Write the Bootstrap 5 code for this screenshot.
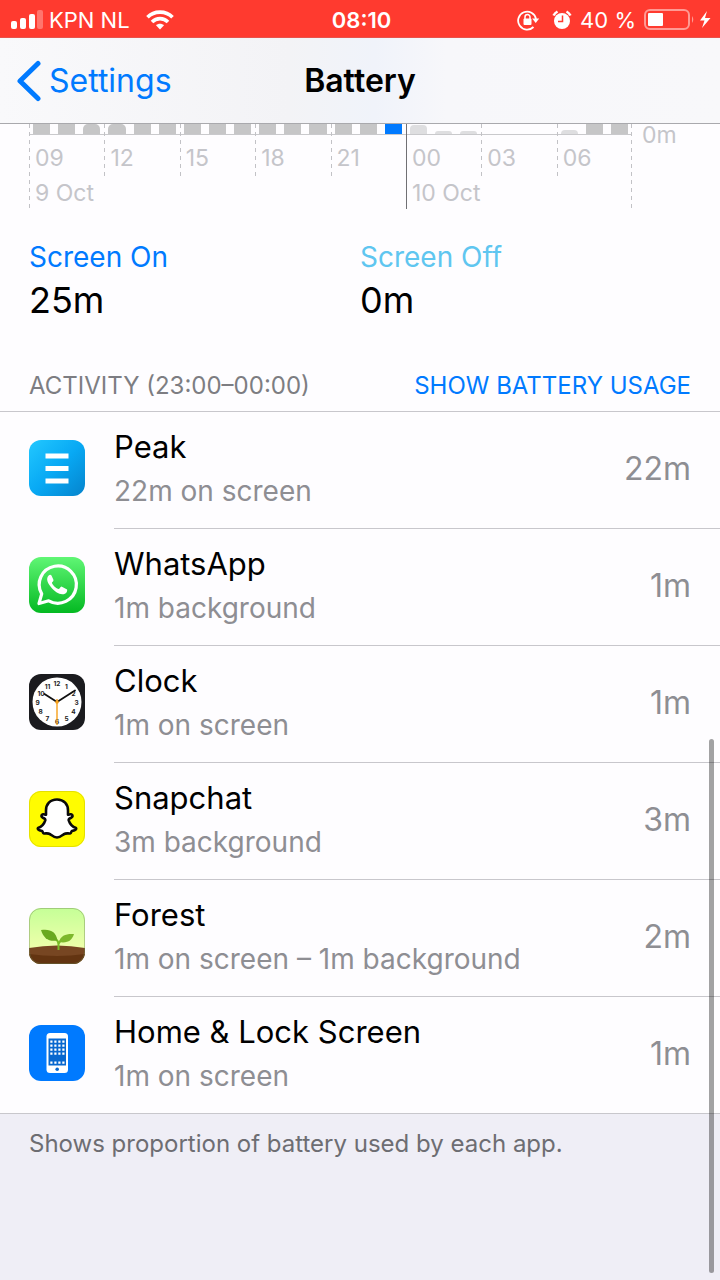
<!DOCTYPE html>
<html lang="en">
<head>
<meta charset="utf-8">
<meta name="viewport" content="width=device-width, initial-scale=1">
<title>Battery</title>
<link href="https://cdn.jsdelivr.net/npm/bootstrap@5.3.0/dist/css/bootstrap.min.css" rel="stylesheet">
<style>
  :root { --ios-blue: #007aff; --ios-line: #c8c7cc; --ios-grey: #8e8e93; }
  body { font-family: Inter, Roboto, sans-serif; background: #efeef6; color: #000; }
  svg { display: block; flex: none; }
  .thirds { display: grid; grid-template-columns: 1fr auto 1fr; align-items: center; }
  .status { background: #ff3a2f; color: #fff; height: 38px; padding: 2px 8px 0 11px; font-size: 22px; line-height: 24px; border-bottom: 1px solid #e8524b; }
  .status .carrier { margin: 0 16px 0 5px; }
  .topbar { background: linear-gradient(90deg, #f9f9fb, #f3f3f6 40%, #f0f3fa 52%, #f7f7fa 62%, #f8f8fa); height: 86px; padding: 0 16px; border-bottom: 1px solid #a9a9ad; }
  .topbar h1 { font-size: 32px; line-height: 40px; font-weight: 600; }
  .back { color: var(--ios-blue); font-size: 32px; line-height: 40px; gap: 7px; }
  .panel { background: #fefdff; }
  .chart { padding-left: 29px; color: #c5c5ca; font-size: 23px; line-height: 28px; }
  .segment { flex: 1 1 0; position: relative; }
  .slots { height: 11px; border-bottom: 1px solid #c9c9cc; }
  .slot { flex: 1 1 0; padding: 0 4px; }
  .usage { background: #c6c6c7; }
  .usage.top-round { border-radius: 5px 5px 0 0; }
  .usage.faint { background: #dedee0; border-radius: 4px 4px 0 0; }
  .usage.active { background: var(--ios-blue); }
  .tick { position: absolute; left: 0; top: 0; width: 1px; height: 54px; background: repeating-linear-gradient(#c2c2c6 0 4px, transparent 4px 8px); }
  .tick.long { height: 85px; }
  .tick.solid { height: 85px; background: #707074; }
  .tick.end { left: auto; right: 0; }
  .hour { padding: 9px 0 0 6px; }
  .day { padding: 7px 0 0 6px; height: 36px; white-space: nowrap; }
  .zero { flex: 0 0 88px; padding-left: 10px; line-height: 22px; }
  .totals { padding: 31px 29px 0; }
  .totals dt { font-weight: 400; font-size: 28px; line-height: 36px; }
  .totals dd { font-size: 36px; line-height: 50px; margin: 0; }
  .on { color: var(--ios-blue); }
  .off { color: #5fc6f0; }
  .heading { padding: 43px 29px 7px; font-size: 24px; line-height: 36px; color: #7d7d82; border-bottom: 1px solid var(--ios-line); }
  .heading h2 { font-size: 24px; line-height: 36px; font-weight: 400; }
  .heading button { color: var(--ios-blue); background: none; border: 0; padding: 0; }
  .apps { padding-left: 29px; }
  .app-row { gap: 29px; }
  .app-row > svg { margin-bottom: 5px; }
  .app-body { border-bottom: 1px solid var(--ios-line); padding: 13px 29px 15px 0; }
  .app-row:last-child .app-body { border-color: transparent; }
  .app-name { font-size: 31px; line-height: 44px; }
  .app-time { font-size: 28px; line-height: 44px; color: var(--ios-grey); }
  .app-total { font-size: 32px; color: var(--ios-grey); }
  .note { border-top: 1px solid var(--ios-line); margin-top: -1px; padding: 12px 29px 100px; font-size: 24px; line-height: 36px; color: #6d6d72; }
  .scroll-thumb { position: fixed; right: 6px; top: 739px; bottom: 7px; width: 5px; border-radius: 3px; background: rgba(0,0,0,.36); }
</style>
</head>
<body>
<div class="thirds status">
  <div class="d-flex align-items-center">
    <svg width="33" height="20" viewBox="0 0 33 20" fill="#fff" aria-hidden="true"><rect x="0" y="11" width="6" height="8" rx="2"/><rect x="9" y="8" width="6" height="11" rx="2"/><rect x="18" y="4" width="6" height="15" rx="2"/><rect x="26" y="0" width="6" height="19" rx="2" opacity=".3"/></svg>
    <span class="carrier">KPN NL</span>
    <svg width="28" height="20" viewBox="0 0 28 20" fill="none" stroke="#fff" stroke-width="3.6" aria-hidden="true"><path d="M1.500 7.200C8 .4 20 .4 26.500 7.200M6 12C10.500 7.500 17.500 7.500 22 12"/><path d="M14 19.500l-4-4.300c2.400-2 5.600-2 8 0z" fill="#fff" stroke="none"/></svg>
  </div>
  <div class="fw-semibold">08:10</div>
  <div class="d-flex align-items-center justify-content-end">
    <svg class="me-1" width="23" height="22" viewBox="0 0 23 22" aria-hidden="true"><path d="M16.500 18A9 9 0 1 1 19 10" fill="none" stroke="#fff" stroke-width="1.800"/><path d="M15.200 9.500h7l-3.500 4.500z" fill="#fff"/><rect x="6.500" y="9.500" width="8" height="6.500" rx="1" fill="#fff"/><path d="M8 10V8a2.500 2.500 0 0 1 5 0v2" fill="none" stroke="#fff" stroke-width="1.500"/></svg>
    <svg class="ms-2 me-2" width="20" height="20" viewBox="0 0 20 20" aria-hidden="true"><circle cx="10" cy="11" r="8" fill="#fff"/><path d="M1.500 5.500A10 10 0 0 1 5.500 1.500M18.500 5.500A10 10 0 0 0 14.500 1.500" stroke="#fff" stroke-width="2.500" fill="none"/><path d="M10.500 5.500V11.500H6" stroke="#ff3a2f" stroke-width="1.500" fill="none"/></svg>
    <span class="me-1">40 %</span>
    <svg class="ms-1" width="68" height="22" viewBox="0 0 68 22" aria-hidden="true"><rect x="1" y="1" width="44" height="19" rx="5" fill="none" stroke="#ff9a94" stroke-width="2"/><rect x="4" y="4" width="15" height="13" rx="1" fill="#fff"/><path d="M48 7q2.500 3.500 0 7z" fill="#ff9a94"/><path d="M63 2L56 11.500h4.500L58 19l8.500-10H61z" fill="#fff"/></svg>
  </div>
</div>

<nav class="thirds topbar">
  <a href="#" class="back d-inline-flex align-items-center text-decoration-none">
    <svg width="26" height="42" viewBox="0 0 26 42" fill="none" stroke="#007aff" stroke-width="5" stroke-linecap="round" stroke-linejoin="round" aria-hidden="true"><path d="M22 3.500L4 21l18 17.500"/></svg>
    <span>Settings</span>
  </a>
  <h1 class="m-0">Battery</h1>
</nav>

<main>
  <div class="panel">
    <div class="chart d-flex">
      <div class="d-flex flex-grow-1" id="segments"></div>
      <div class="zero">0m</div>
    </div>
    <dl class="totals row gx-0 m-0">
      <div class="col-6"><dt class="on">Screen On</dt><dd>25m</dd></div>
      <div class="col-6"><dt class="off">Screen Off</dt><dd>0m</dd></div>
    </dl>
    <div class="heading d-flex justify-content-between">
      <h2 class="m-0">ACTIVITY (23:00–00:00)</h2>
      <button type="button">SHOW BATTERY USAGE</button>
    </div>
    <ul class="apps list-unstyled m-0">
      <li class="app-row d-flex align-items-center">
        <svg width="56" height="56" viewBox="0 0 56 56" aria-hidden="true"><defs><linearGradient id="peak" x1="0" y1="0" x2="1" y2="1"><stop stop-color="#23c8ff"/><stop offset=".5" stop-color="#08a9f4"/><stop offset="1" stop-color="#0583cc"/></linearGradient></defs><rect width="56" height="56" rx="12" fill="url(#peak)"/><path d="M16.500 16h23M16.500 28.500h23M16.500 41h23" stroke="#fff" stroke-width="5"/></svg>
        <div class="app-body d-flex align-items-center justify-content-between flex-grow-1"><div><div class="app-name">Peak</div><div class="app-time">22m on screen</div></div><div class="app-total">22m</div></div>
      </li>
      <li class="app-row d-flex align-items-center">
        <svg width="56" height="56" viewBox="0 0 56 56" aria-hidden="true"><defs><linearGradient id="wa" x1="0" y1="0" x2="0" y2="1"><stop stop-color="#60f675"/><stop offset="1" stop-color="#04b922"/></linearGradient></defs><rect width="56" height="56" rx="12" fill="url(#wa)"/><path d="M10 46.500l2.700-9.600a18.600 18.600 0 1 1 7 6.900z" fill="none" stroke="#fff" stroke-width="3.200" stroke-linejoin="round"/><path d="M22.500 18.500c-.8-.9-2-.8-2.800.1-2.600 2.800-1.800 6.400 1.800 11 4.600 6 10.600 9.200 14.400 7.100 2-1.100 2.500-2.700 2.200-4.300l-5.600-2.900c-1.300.4-1.900 2.600-3.200 2.500-2.800-.9-5.400-3.500-6.400-6 0-1.100 1.700-1.800 1.600-3.100z" fill="#fff"/></svg>
        <div class="app-body d-flex align-items-center justify-content-between flex-grow-1"><div><div class="app-name">WhatsApp</div><div class="app-time">1m background</div></div><div class="app-total">1m</div></div>
      </li>
      <li class="app-row d-flex align-items-center">
        <svg width="56" height="56" viewBox="0 0 56 56" aria-hidden="true"><rect width="56" height="56" rx="12" fill="#1b1b1f"/><circle cx="28" cy="28" r="24.500" fill="#fff"/><g font-size="6.500" font-weight="700" text-anchor="middle" fill="#222"><text x="28" y="12">12</text><text x="37.500" y="14.500">1</text><text x="44.500" y="21.500">2</text><text x="47.500" y="31">3</text><text x="44.500" y="39.500">4</text><text x="37.500" y="46.500">5</text><text x="28" y="49.500">6</text><text x="18.500" y="46.500">7</text><text x="11.500" y="39.500">8</text><text x="8.500" y="31">9</text><text x="12" y="21.500">10</text><text x="18.500" y="14.500">11</text></g><path d="M28 28L15.500 20M28 28L46 16.500" stroke="#111" stroke-width="1.800" stroke-linecap="round"/><path d="M28 25v26" stroke="#f7a11a" stroke-width="1.400"/><circle cx="28" cy="28" r="1.800" fill="#f7a11a"/></svg>
        <div class="app-body d-flex align-items-center justify-content-between flex-grow-1"><div><div class="app-name">Clock</div><div class="app-time">1m on screen</div></div><div class="app-total">1m</div></div>
      </li>
      <li class="app-row d-flex align-items-center">
        <svg width="56" height="56" viewBox="0 0 56 56" aria-hidden="true"><rect width="56" height="56" rx="12" fill="#fffc00"/><rect x=".5" y=".5" width="55" height="55" rx="11.500" fill="none" stroke="#e4e000"/><path d="M28 8.500c-7 0-11 4.800-11 11v4.200c-1.300 0-2.400-.9-3.700-.2-1.500.9-.9 2.400.4 3.100 1.200.7 3 1.200 2.600 2.800-1.200 3.700-3.900 6.500-7.300 7.700-1 1.300 1.500 2.300 4.200 2.900.9 1 .3 2.200 1.700 2.400 2.100.2 4-.6 6.100.7 2.200 1.500 3.900 3.400 7 3.400s4.800-1.900 7-3.400c2.100-1.300 4-.5 6.100-.7 1.400-.2.800-1.400 1.700-2.400 2.700-.6 5.200-1.600 4.200-2.900-3.400-1.200-6.100-4-7.300-7.700-.4-1.600 1.400-2.100 2.600-2.800 1.300-.7 1.900-2.200.4-3.100-1.300-.7-2.400.2-3.700.2v-4.200c0-6.200-4-11-11-11z" fill="#fff" stroke="#0a0a0a" stroke-width="2.600" stroke-linejoin="round"/></svg>
        <div class="app-body d-flex align-items-center justify-content-between flex-grow-1"><div><div class="app-name">Snapchat</div><div class="app-time">3m background</div></div><div class="app-total">3m</div></div>
      </li>
      <li class="app-row d-flex align-items-center">
        <svg width="56" height="56" viewBox="0 0 56 56" aria-hidden="true"><defs><clipPath id="tile"><rect width="56" height="56" rx="12"/></clipPath><linearGradient id="sky" x1="0" y1="0" x2="0" y2="1"><stop stop-color="#c5ff97"/><stop offset=".7" stop-color="#edffaa"/></linearGradient></defs><g clip-path="url(#tile)"><rect width="56" height="56" fill="url(#sky)"/><path d="M0 40q28-5 56 0v16H0z" fill="#774622"/><path d="M0 46q28 4 56 0v10H0z" fill="#633411"/></g><path d="M29.500 42v-5.500q0-3.500-2.500-5M29.500 36q1-3 4-4" stroke="#79bd26" stroke-width="2" fill="none"/><path d="M12 22c9-1.500 15 1.500 16.500 10.500C20 34 14.500 30.500 12 22z" fill="#69a91f"/><path d="M45 26c-8-.5-13.500 1.500-15 8 8.500 1.500 13-1.500 15-8z" fill="#7db82c"/><rect x=".5" y=".5" width="55" height="55" rx="11.500" fill="none" stroke="#6a8050" stroke-opacity=".4"/></svg>
        <div class="app-body d-flex align-items-center justify-content-between flex-grow-1"><div><div class="app-name">Forest</div><div class="app-time">1m on screen – 1m background</div></div><div class="app-total">2m</div></div>
      </li>
      <li class="app-row d-flex align-items-center">
        <svg width="56" height="56" viewBox="0 0 56 56" aria-hidden="true"><rect width="56" height="56" rx="12" fill="#007aff"/><rect x="17.500" y="8" width="21.500" height="40" rx="3.500" fill="#fff"/><path d="M19.500 13.500h17.500v27H19.500z" fill="#0868cf"/><path d="M21.300 16.700h15M21.300 20.700h15M21.300 24.700h15M21.300 28.700h15M21.300 37.700h15" stroke="#fff" stroke-width="2.200" stroke-dasharray="2.200 1.800"/><circle cx="28.200" cy="44.200" r="1.800" fill="#0868cf"/></svg>
        <div class="app-body d-flex align-items-center justify-content-between flex-grow-1"><div><div class="app-name">Home &amp; Lock Screen</div><div class="app-time">1m on screen</div></div><div class="app-total">1m</div></div>
      </li>
    </ul>
  </div>
  <p class="note mb-0">Shows proportion of battery used by each app.</p>
</main>
<div class="scroll-thumb" aria-hidden="true"></div>

<script src="https://cdn.jsdelivr.net/npm/bootstrap@5.3.0/dist/js/bootstrap.bundle.min.js"></script>
<script>
  // Each segment covers three hours; a bar is [height in px, extra class].
  const full = [10, ''], soft = [10, 'top-round'], none = [0, ''];
  const segments = [
    { hour: '09', day: '9 Oct', tick: 'long', bars: [full, full, soft] },
    { hour: '12', bars: [soft, full, full] },
    { hour: '15', bars: [full, full, full] },
    { hour: '18', bars: [full, full, full] },
    { hour: '21', bars: [full, full, [10, 'active']] },
    { hour: '00', day: '10 Oct', tick: 'solid', bars: [[9, 'faint'], [3, 'faint'], [3, 'faint']] },
    { hour: '03', bars: [none, none, none] },
    { hour: '06', bars: [[4, 'faint'], full, full], end: true }
  ];
  document.getElementById('segments').innerHTML = segments.map(s => `
    <div class="segment">
      <div class="slots d-flex align-items-end">${s.bars.map(([h, c]) =>
        `<div class="slot"><div class="usage ${c}" style="height:${h}px"></div></div>`).join('')}</div>
      <div class="hour">${s.hour}</div>
      <div class="day">${s.day || ''}</div>
      <i class="tick ${s.tick || ''}"></i>${s.end ? '<i class="tick long end"></i>' : ''}
    </div>`).join('');
</script>
</body>
</html>
